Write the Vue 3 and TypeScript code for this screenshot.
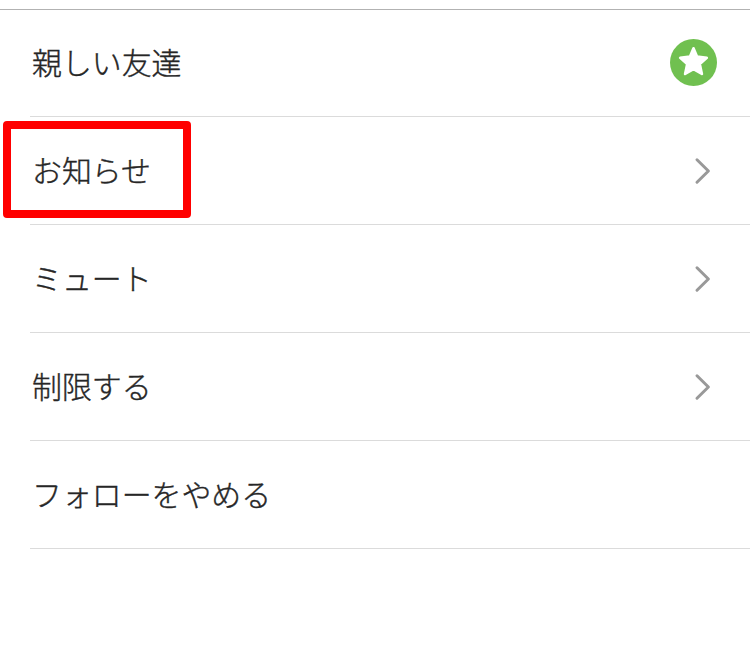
<script setup lang="ts">
interface Row { label: string; kind: 'star' | 'chevron' | 'plain'; highlighted?: boolean }
const rows: Row[] = [
  { label: '親しい友達', kind: 'star' },
  { label: 'お知らせ', kind: 'chevron', highlighted: true },
  { label: 'ミュート', kind: 'chevron' },
  { label: '制限する', kind: 'chevron' },
  { label: 'フォローをやめる', kind: 'plain' },
]
</script>

<template>
  <main class="sheet">
    <ul class="list">
      <li v-for="row in rows" :key="row.label" class="row">
        <span class="label">{{ row.label }}</span>
        <svg v-if="row.kind === 'star'" class="star" viewBox="0 0 47 47" aria-hidden="true">
          <circle cx="23.5" cy="23.5" r="23.5" fill="#70c050" />
          <path d="M23.5 9.3L27 17.6 36.8 18.8 29.8 25.1 31.9 35 23.5 30.1 15.1 35 17.2 25.1 10.2 18.8 20 17.6Z" fill="#fff" stroke="#fff" stroke-width="2.6" stroke-linejoin="round" />
        </svg>
        <svg v-else-if="row.kind === 'chevron'" class="chevron" viewBox="0 0 18 28" aria-hidden="true">
          <path d="M4 2.8L15.4 14 4 25.2" fill="none" stroke="#999" stroke-width="3" stroke-linecap="round" stroke-linejoin="round" />
        </svg>
        <span v-if="row.highlighted" class="highlight"></span>
      </li>
    </ul>
  </main>
</template>

<style>
body { background: #fff; }
</style>

<style scoped>
.sheet {
  box-sizing: border-box;
  height: 657px;
  padding-top: 9px;
  overflow: hidden;
  background: #fff;
  font-family: "Noto Sans CJK JP", sans-serif;
}
.list {
  margin: 0;
  padding: 0 0 0 30px;
  list-style: none;
  border-top: 1px solid #b2b2b2;
}
.row {
  position: relative;
  box-sizing: border-box;
  height: 108px;
  display: flex;
  align-items: center;
  justify-content: space-between;
  padding: 0 33px 0 2px;
  border-bottom: 1px solid #dbdbdb;
}
.row:first-child { height: 107px; }
.label {
  padding-bottom: 4px;
  color: #262626;
  font-size: 29.9px;
  font-weight: 300;
  line-height: 44px;
  white-space: nowrap;
  -webkit-text-stroke: 0.4px #262626;
}
.star { width: 47px; height: 47px; margin-bottom: 1px; }
.chevron { width: 18px; height: 28px; margin-right: 6px; }
.highlight {
  position: absolute;
  box-sizing: border-box;
  left: -27px;
  top: 4px;
  width: 188px;
  height: 97px;
  border: 8px solid #f00;
  border-radius: 4px;
}
</style>
